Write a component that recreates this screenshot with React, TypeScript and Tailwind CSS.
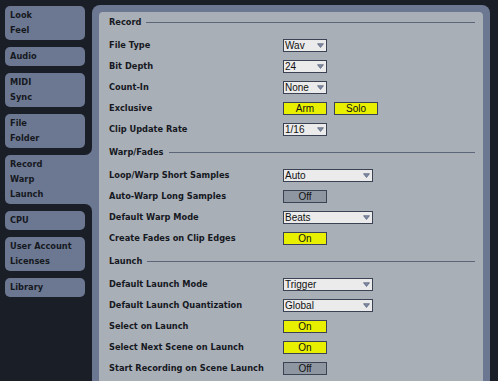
import React from "react";

type Ctrl =
  | { kind: "select"; value: string; wide?: boolean }
  | { kind: "toggle"; on: boolean }
  | { kind: "pair"; items: string[] };

const tabs = [
  ["Look", "Feel"],
  ["Audio"],
  ["MIDI", "Sync"],
  ["File", "Folder"],
  ["Record", "Warp", "Launch"],
  ["CPU"],
  ["User Account", "Licenses"],
  ["Library"],
];
const selectedTab = 4;

const sections: { title: string; rows: [string, Ctrl][] }[] = [
  {
    title: "Record",
    rows: [
      ["File Type", { kind: "select", value: "Wav" }],
      ["Bit Depth", { kind: "select", value: "24" }],
      ["Count-In", { kind: "select", value: "None" }],
      ["Exclusive", { kind: "pair", items: ["Arm", "Solo"] }],
      ["Clip Update Rate", { kind: "select", value: "1/16" }],
    ],
  },
  {
    title: "Warp/Fades",
    rows: [
      ["Loop/Warp Short Samples", { kind: "select", value: "Auto", wide: true }],
      ["Auto-Warp Long Samples", { kind: "toggle", on: false }],
      ["Default Warp Mode", { kind: "select", value: "Beats", wide: true }],
      ["Create Fades on Clip Edges", { kind: "toggle", on: true }],
    ],
  },
  {
    title: "Launch",
    rows: [
      ["Default Launch Mode", { kind: "select", value: "Trigger", wide: true }],
      ["Default Launch Quantization", { kind: "select", value: "Global", wide: true }],
      ["Select on Launch", { kind: "toggle", on: true }],
      ["Select Next Scene on Launch", { kind: "toggle", on: true }],
      ["Start Recording on Scene Launch", { kind: "toggle", on: false }],
    ],
  },
];

const Select = ({ value, wide }: { value: string; wide?: boolean }) => (
  <div
    className={`${wide ? "w-[90px]" : "w-[44px]"} h-[13px] bg-[#ebebeb] border border-[#3b4254] flex items-center justify-between pl-[1px] pr-[2px]`}
  >
    <span className="text-[10px] leading-none text-[#111]">{value}</span>
    <svg width="7" height="5" viewBox="0 0 7 5">
      <path d="M0.5 0.7h6L3.5 4.5z" fill="#7f8ba3" stroke="#56607a" strokeWidth="0.7" />
    </svg>
  </div>
);

const Btn = ({ label, on }: { label: string; on: boolean }) => (
  <div
    className={`w-[44px] h-[13px] border border-[#3b4254] flex items-center justify-center text-[10px] leading-none text-[#111] ${on ? "bg-[#e8f000]" : "bg-[#8e96a2]"}`}
  >
    {label}
  </div>
);

const Control = ({ c }: { c: Ctrl }) => {
  if (c.kind === "select") return <Select value={c.value} wide={c.wide} />;
  if (c.kind === "toggle") return <Btn label={c.on ? "On" : "Off"} on={c.on} />;
  return (
    <div className="flex gap-[7px]">
      {c.items.map((it) => (
        <Btn key={it} label={it} on />
      ))}
    </div>
  );
};

export default function App() {
  return (
    <div className="w-[498px] h-[381px] overflow-hidden bg-[#1a1e26] flex text-[#16181f]">
      {/* tabs */}
      <div className="w-[92px] shrink-0 pt-[6px] flex flex-col gap-[7px] font-['DejaVu_Sans',sans-serif] font-bold text-[8.25px]">
        {tabs.map((lines, i) => {
          const sel = i === selectedTab;
          return (
            <div
              key={i}
              className={`ml-[5px] py-[2px] pl-[5px] leading-[15px] bg-[#6c7891] ${sel ? "w-[87px] rounded-l-[5px] relative" : "w-[80px] rounded-[5px]"}`}
            >
              {lines.map((l) => (
                <div key={l}>{l}</div>
              ))}
              {sel && (
                <>
                  <div className="absolute right-0 top-[-8px] w-[7px] h-[8px] bg-[#6c7891]">
                    <div className="w-full h-full bg-[#1a1e26] rounded-br-[7px]" />
                  </div>
                  <div className="absolute right-0 bottom-[-8px] w-[7px] h-[8px] bg-[#6c7891]">
                    <div className="w-full h-full bg-[#1a1e26] rounded-tr-[7px]" />
                  </div>
                </>
              )}
            </div>
          );
        })}
      </div>

      {/* panel */}
      <div className="flex-1 mt-[5px] mr-[8px] bg-[#6c7891] rounded-t-[8px] px-[7px] pt-[7px]">
        <div className="h-full bg-[#a8afb6] rounded-t-[4px] pl-[10px] pr-[8px] pt-[3px]">
          {sections.map((s, si) => (
            <div key={s.title} className={si > 0 ? "mt-[5px]" : ""}>
              <div className="h-[14px] flex items-center font-['DejaVu_Sans',sans-serif] font-bold text-[8.25px]">
                <span>{s.title}</span>
                <div className="flex-1 ml-[5px] h-px bg-[#5d6579]" />
              </div>
              <div className="pt-[6px]">
                {s.rows.map(([label, c]) => (
                  <div key={label} className="h-[21px] flex items-center">
                    <div className="w-[174px] shrink-0 font-['DejaVu_Sans',sans-serif] font-bold text-[8.25px]">
                      {label}
                    </div>
                    <div className="font-['Liberation_Sans',Arial,sans-serif]">
                      <Control c={c} />
                    </div>
                  </div>
                ))}
              </div>
            </div>
          ))}
        </div>
      </div>
    </div>
  );
}
